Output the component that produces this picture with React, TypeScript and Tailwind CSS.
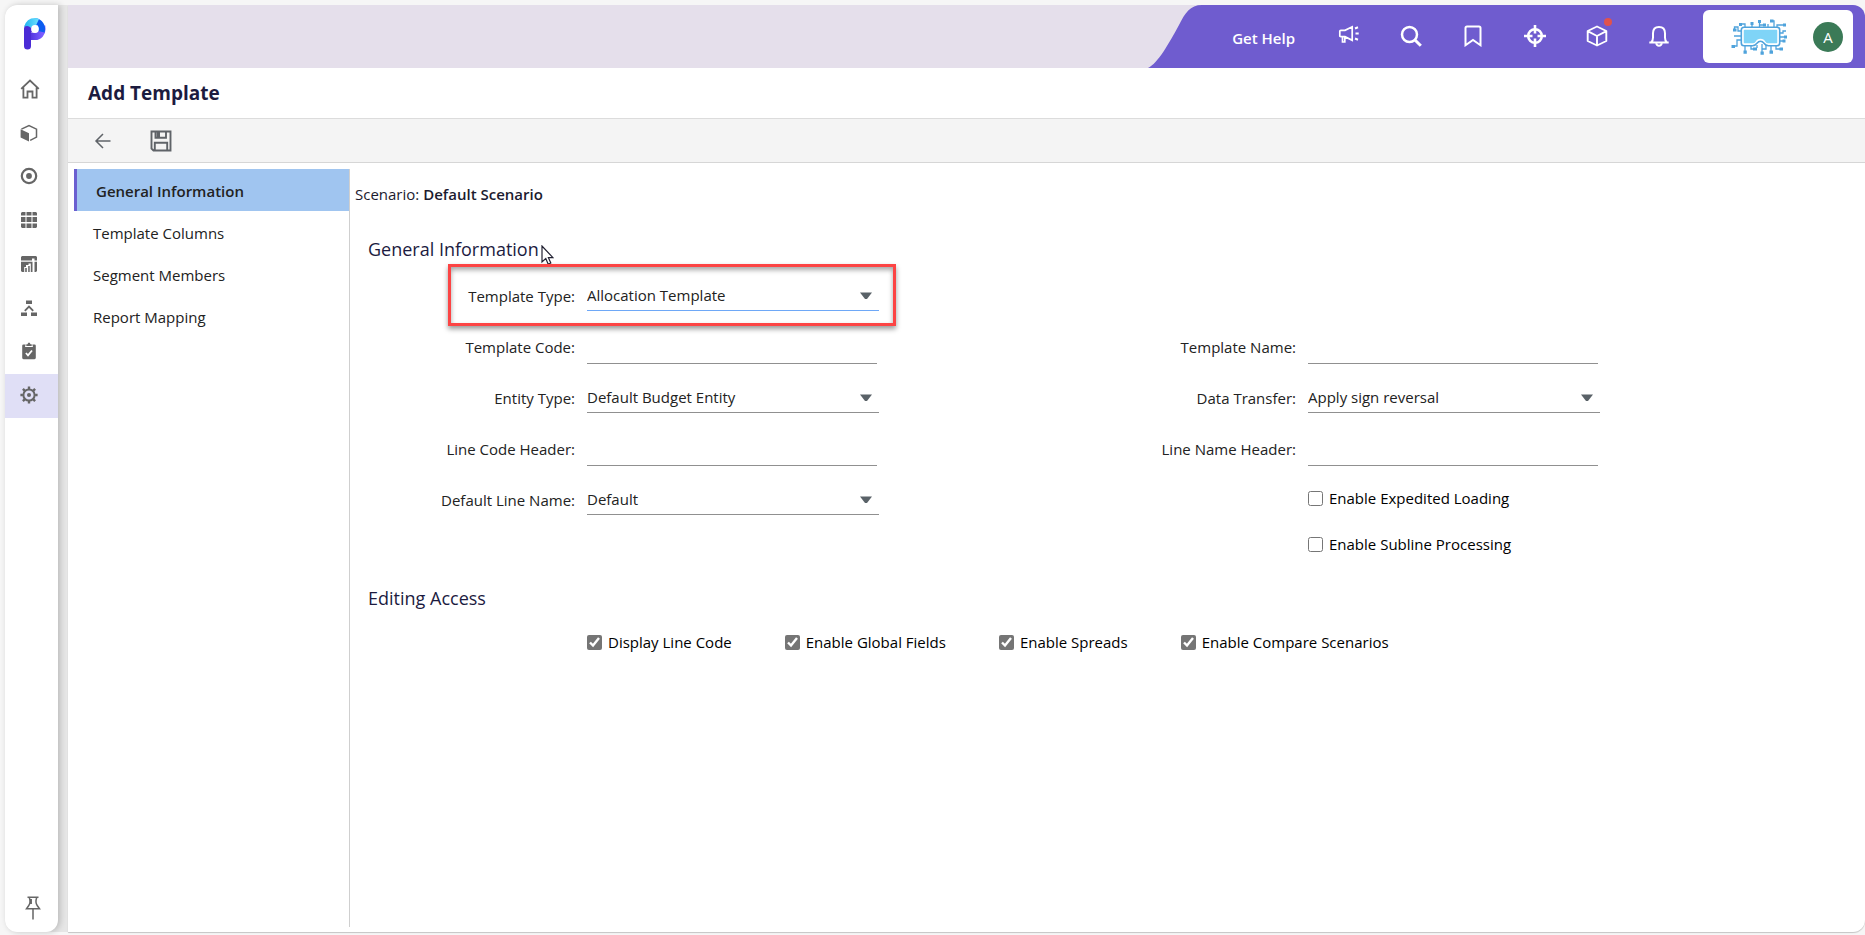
import type { ReactNode } from "react";

const navItems = ["Template Columns", "Segment Members", "Report Mapping"];

const editingOptions = [
  { id: "displayLineCode", label: "Display Line Code" },
  { id: "enableGlobalFields", label: "Enable Global Fields" },
  { id: "enableSpreads", label: "Enable Spreads" },
  { id: "enableCompareScenarios", label: "Enable Compare Scenarios" },
];

function Logo() {
  return (
    <svg width="22" height="32" viewBox="0 0 22 32">
      <defs>
        <linearGradient id="stem" x1="0" y1="0" x2="1" y2="0">
          <stop offset="0" stopColor="#4a2bd6" />
          <stop offset="1" stopColor="#7a5cff" />
        </linearGradient>
        <linearGradient id="arc" x1="0" y1="0" x2="1" y2="0">
          <stop offset="0" stopColor="#1fb4f0" />
          <stop offset="1" stopColor="#6fe0ff" />
        </linearGradient>
      </defs>
      <path d="M4 11H18a7 7 0 0 1-7 7.500H3.500z" fill="none" stroke="url(#stem)" strokeWidth="7" />
      <path d="M11 0a11 11 0 0 1 9.500 14.500L14 13V7.500L11 7z" fill="#0b5cf0" />
      <path d="M0 11q0-3 3.500-3T7 12v16q0 3.500-3.500 3.500T0 28z" fill="#4a2bd6" />
      <path d="M0 9Q2.500 0 11 0q3 0 4 1L12 7.500Q8 7.500 7 10 4 6.500 0 9z" fill="url(#arc)" />
      <circle cx="11" cy="11" r="3.900" fill="#fff" />
    </svg>
  );
}

function HomeIcon() {
  return (
    <svg width="20" height="20" viewBox="0 0 20 20" fill="none" stroke="currentColor" strokeWidth="1.800">
      <path d="M1.200 9.800 10 1.600l8.800 8.200M3.400 8.500V18.600h4.100v-6.100h5v6.100h4.100V8.500" />
    </svg>
  );
}

function CubeIcon() {
  return (
    <svg width="18" height="18" viewBox="0 0 18 18" fill="none" stroke="currentColor" strokeWidth="1.500">
      <path d="M1.400 5.200 9 1.500l7.500 3.700v7.900L10.200 16.300" />
      <path d="M.6 5.200 9 9.200v8.300L.6 13.600z" fill="currentColor" stroke="none" />
    </svg>
  );
}

function TargetIcon() {
  return (
    <svg width="18" height="18" viewBox="0 0 18 18" fill="none">
      <circle cx="9" cy="9" r="7.200" stroke="currentColor" strokeWidth="2.200" />
      <circle cx="9" cy="9" r="2.900" fill="currentColor" />
    </svg>
  );
}

function GridIcon() {
  return (
    <svg width="18" height="18" viewBox="0 0 18 18" fill="currentColor">
      <path d="M2 1h3.500v3.500H1V2zM6.500 1h5v3.500h-5zM12.500 1H16l1 1v2.500h-4.500zM1 6h4.500v5H1zM6.500 6h5v5h-5zM12.500 6H17v5h-4.500zM1 12.500h4.500V17H2l-1-1zM6.500 12.500h5V17h-5zM12.500 12.500H17V16l-1 1h-3.500z" />
    </svg>
  );
}

function ReportIcon() {
  return (
    <svg width="18" height="18" viewBox="0 0 18 18" fill="currentColor">
      <path d="M2 1h14l1 1v3.500h-2.500V3.500H12v2H1V2z" />
      <path d="M1 6.800h11.500V17h-1.700V8.500H8.500V10H6v2H4.200v5H2l-1-1zM5.200 13h1.600v4H5.200zM8.200 11h1.500v6H8.200zM14.500 6.800H17V16l-1 1h-1.500z" />
    </svg>
  );
}

function HierarchyIcon() {
  return (
    <svg width="18" height="18" viewBox="0 0 18 18" fill="currentColor">
      <path d="M6 1.500h6V5H6zM1 13.500h6V17H1zM11 13.500h6V17h-6z" />
      <path d="M4.800 11.800 9 7.500l4.200 4.300" fill="none" stroke="currentColor" strokeWidth="1.800" />
    </svg>
  );
}

function ClipboardIcon() {
  return (
    <svg width="18" height="18" viewBox="0 0 18 18" fill="currentColor">
      <path d="M3.500 2.500h2.200L5 5h8l-.7-2.500h2.200q1.300 0 1.300 1.300v12q0 1.400-1.300 1.400h-11Q2.200 17.200 2.200 15.800v-12q0-1.300 1.300-1.300z" />
      <path d="M6.300 4V2.200h1.200Q8 .5 9 .5t1.500 1.700h1.200V4z" />
      <path d="m5.900 11 2.100 2.300 4-4.800" fill="none" stroke="#fff" strokeWidth="1.800" />
    </svg>
  );
}

function GearIcon() {
  return (
    <svg width="18" height="18" viewBox="0 0 18 18" fill="none" stroke="currentColor">
      <circle cx="9" cy="9" r="5.600" strokeWidth="2" />
      <path d="M9 .4v2.500M9 15.100v2.500M.4 9h2.500M15.100 9h2.500M2.900 2.900l2 2M13.100 13.100l2 2M2.900 15.100l2-2M13.100 4.900l2-2" strokeWidth="2.400" />
      <circle cx="9" cy="9" r="2" fill="currentColor" stroke="none" />
    </svg>
  );
}

function PinIcon() {
  return (
    <svg width="16" height="24" viewBox="0 0 16 24" fill="none" stroke="currentColor" strokeWidth="1.500">
      <path d="M2.500 1.200h11M4.300 1.500q1.700 5-.5 8L1.500 12.700h13l-2.300-3.200q-2.200-3-.5-8M8 13v10.500M6.200 3v5" />
    </svg>
  );
}

const railItems: { name: string; icon: ReactNode }[] = [
  { name: "Home", icon: <HomeIcon /> },
  { name: "Models", icon: <CubeIcon /> },
  { name: "Planning", icon: <TargetIcon /> },
  { name: "Grid", icon: <GridIcon /> },
  { name: "Reports", icon: <ReportIcon /> },
  { name: "Hierarchy", icon: <HierarchyIcon /> },
  { name: "Tasks", icon: <ClipboardIcon /> },
  { name: "Settings", icon: <GearIcon /> },
];

const headerItems: { name: string; icon: ReactNode }[] = [
  {
    name: "Announcements",
    icon: (
      <svg width="22" height="22" viewBox="0 0 22 22" fill="none" stroke="currentColor" strokeWidth="1.700">
        <path d="M1.800 6.300q0-1 1-1H7l7.200-3.500v13.500L7 11.700H2.800q-1 0-1-1zM4.500 12v5h2.300v-4.600" />
        <path d="m17 3.500 3-1.200M17.500 8.500h3.200M17 13.500l3 1.200" strokeWidth="2" />
      </svg>
    ),
  },
  {
    name: "Search",
    icon: (
      <svg width="22" height="22" viewBox="0 0 22 22" fill="none" stroke="currentColor" strokeWidth="2.500">
        <circle cx="9.500" cy="9.500" r="7.500" />
        <path d="m15 15 5.800 5.800" strokeWidth="3" />
      </svg>
    ),
  },
  {
    name: "Bookmarks",
    icon: (
      <svg width="22" height="22" viewBox="0 0 22 22" fill="none" stroke="currentColor" strokeWidth="2">
        <path d="M3.500 3q0-1.500 1.500-1.500h12q1.500 0 1.500 1.500v17.200L11 15l-7.500 5.200z" />
      </svg>
    ),
  },
  {
    name: "Locate",
    icon: (
      <svg width="22" height="22" viewBox="0 0 22 22" fill="none" stroke="currentColor">
        <circle cx="11" cy="11" r="6.800" strokeWidth="2.600" />
        <path d="M11 0v8.500M11 13.500V22M0 11h8.500M13.500 11H22" strokeWidth="2.600" />
      </svg>
    ),
  },
  {
    name: "Apps",
    icon: (
      <svg width="22" height="22" viewBox="0 0 22 22" fill="none" stroke="currentColor" strokeWidth="1.900">
        <path d="M11 1.500 20.300 6v10L11 20.500 1.700 16V6zM1.700 6.200 11 11l9.300-4.800M11 11v9.500" strokeLinejoin="round" />
      </svg>
    ),
  },
  {
    name: "Notifications",
    icon: (
      <svg width="22" height="22" viewBox="0 0 22 22" fill="none" stroke="currentColor" strokeWidth="2">
        <path d="M1.300 17.600h19.400M3.300 17.200q1.700-1.700 1.700-4.700V8.300Q5 2 11 2t6 6.300v4.200q0 3 1.700 4.700" />
        <path d="M8.200 18.200q.4 2.500 2.800 2.500t2.800-2.500" />
      </svg>
    ),
  },
];

function CompanyLogo() {
  return (
    <svg width="56" height="36" viewBox="0 0 56 36" fill="none" stroke="#4fa3dc" strokeWidth="1.300">
      <path d="M12 11.500q0-1.500 1.500-1.500h32q1.500 0 1.500 1.500v12q0 1.500-1.500 1.500H37q-2 0-3-1.700Q32.300 20.500 29.500 20.500T25 23.300Q24 25 22 25h-8.500Q12 25 12 23.500z" fill="#7fd4f7" stroke="#fff" strokeWidth="1.500" />
      <path d="M10.300 11q0-2.700 2.700-2.700h33q2.700 0 2.700 2.700v13q0 2.700-2.700 2.700h-8.500q-3 0-4.500-2.500-1.500-2-3.500-2T26 24.200q-1.500 2.500-4.500 2.500H13q-2.700 0-2.700-2.700z" strokeWidth="1.600" />
      <path d="M14 8V5H9.500M21 8V4M28.500 8V2M28.500 6H33M37 8V5M43 8V2h-2M46 8V6h7.500M10 12H7V8H3.500V11M10 17H3M10 21H6v6H2M49 14h3v-2h3M49 18h5M49 22h4M14 27v6M20 27v3h4M26 26v3M31 25v9M31 30h4V26M40 27v6M45 27v3h5" />
      <path d="M8 4h3v3H8zM19.500 3h3v3h-3zM27 1h3v3h-3zM32 4.500h3v3h-3zM39 .5h3.500v3H39zM52 4.500h3v3h-3zM2 9.500h3.500v3H2zM.5 26H4v3H.5zM12.500 31.500h3.300v3.300h-3.300zM22 28.500h4v3h-4zM29.500 32.500h3.300v3.300h-3.300zM38.500 31.500H42v3.300h-3.500zM48.500 28.500H52v3h-3.500zM53 16.500h3v3h-3zM51.500 20.500h3v3h-3z" fill="#4fa3dc" stroke="none" />
    </svg>
  );
}

function FormRow({ id, label, children }: { id: string; label: string; children: ReactNode }) {
  return (
    <div className="relative flex h-[51px] w-[513px] items-center gap-3">
      <label htmlFor={id} className="w-[208px] shrink-0 pb-[2px] text-right">
        {label}
      </label>
      {children}
    </div>
  );
}

function TextRow({ id, label }: { id: string; label: string }) {
  return (
    <FormRow id={id} label={label}>
      <input id={id} type="text" className="h-8 w-[290px] border-b border-[#909090] bg-transparent outline-none" />
    </FormRow>
  );
}

function SelectRow({ id, label, value, active = false }: { id: string; label: string; value: string; active?: boolean }) {
  return (
    <FormRow id={id} label={label}>
      <div className="relative w-[292px]">
        <select
          id={id}
          className={`block h-7 w-full appearance-none border-b bg-transparent pb-[2px] outline-none ${
            active ? "border-[#6ea8f7]" : "border-[#909090]"
          }`}
        >
          <option>{value}</option>
        </select>
        <svg className="pointer-events-none absolute top-[9px] right-[7px]" width="12" height="8" viewBox="0 0 12 8" fill="#5a6268">
          <path d="M0 .5h12L7 7H5z" />
        </svg>
      </div>
      {/* Highlight around the field */}
      {active && (
        <div className="pointer-events-none absolute -top-[7px] -right-4 -bottom-1 left-[81px] border-3 border-[#fc4444] shadow-[0_3px_5px_rgba(0,0,0,0.4),inset_0_3px_5px_rgba(0,0,0,0.35)]" />
      )}
    </FormRow>
  );
}

function CheckField({ id, label, checked = false }: { id: string; label: string; checked?: boolean }) {
  return (
    <div className="flex items-center gap-[6px] text-black">
      <input id={id} type="checkbox" defaultChecked={checked} className="size-[15px] accent-[#757575]" />
      <label htmlFor={id}>{label}</label>
    </div>
  );
}

export default function App() {
  return (
    <div className="flex min-h-screen bg-[#f6f6f6] pt-[5px] pb-[3px] pl-[5px] font-['Open_Sans',sans-serif] text-[15px] leading-5 text-[#222]">
      {/* Icon rail */}
      <div className="flex shrink-0 rounded-l-xl bg-[#e6e6e6] pr-[10px]">
        <aside className="flex w-[53px] flex-col rounded-l-xl rounded-br-xl bg-white text-[#666] shadow-[2px_0_6px_rgba(0,0,0,0.2)]">
          <a href="#" aria-label="Start" className="flex h-[63px] items-start pt-[13px] pl-[19px]">
            <Logo />
          </a>
          <nav className="flex h-[350px] flex-col">
            {railItems.map((item) => (
              <button
                key={item.name}
                aria-label={item.name}
                className={`flex flex-1 items-center pb-[2px] pl-[15px] ${item.name === "Settings" ? "bg-[#e0dff6]" : ""}`}
              >
                {item.icon}
              </button>
            ))}
          </nav>
          <button aria-label="Pin menu" className="mt-auto mb-3 flex pl-5">
            <PinIcon />
          </button>
        </aside>
      </div>

      <div className="flex min-w-0 flex-1 flex-col overflow-hidden rounded-r-xl bg-white shadow-[0_1px_1px_rgba(0,0,0,0.2)]">
        {/* Top bar */}
        <header className="flex h-[63px] justify-end bg-[#e5dfeb]">
          <svg width="60" height="63" viewBox="0 0 60 63" fill="#6f5ccf">
            <path d="M0 63C10 58 20 40 31 20 37 8 42 0 54 0H60V63z" />
          </svg>
          <div className="flex items-center bg-[#6f5ccf] pr-3 text-white">
            <a href="#" className="mt-[2px] mr-[43px] ml-6 font-semibold">
              Get Help
            </a>
            <div className="flex gap-10 pr-[33px] pb-[2px]">
              {headerItems.map((item) => (
                <button key={item.name} aria-label={item.name} className="relative">
                  {item.icon}
                  {item.name === "Apps" && <span className="absolute -top-[7px] -right-1 size-2 rounded-full bg-[#e0524d]" />}
                </button>
              ))}
            </div>
            <div className="flex h-[53px] w-[150px] items-center justify-between rounded-md bg-white pr-[10px] pl-7">
              <CompanyLogo />
              <button className="size-[30px] rounded-full bg-[#3b7a57] text-white">A</button>
            </div>
          </div>
        </header>

        <h1 className="flex h-[51px] items-center border-b border-[#dcdcdc] pl-5 text-[19px] font-bold text-[#1c1b3f]">
          Add Template
        </h1>

        {/* Toolbar */}
        <div className="flex h-11 items-center gap-[38px] border-b border-[#d6d6d6] bg-[#f4f4f4] pl-[26px] text-[#5f6368]">
          <button aria-label="Back">
            <svg width="18" height="18" viewBox="0 0 18 18" fill="none" stroke="currentColor" strokeWidth="1.500">
              <path d="M16.500 9H2M9 2 2 9l7 7" />
            </svg>
          </button>
          <button aria-label="Save">
            <svg width="22" height="22" viewBox="0 0 22 22" fill="none" stroke="currentColor" strokeWidth="1.900">
              <path d="M1.500 1.500h19v19h-17l-2-2zM5.500 1.500v6.300h10.500V1.500M4.800 20.500v-7.700h12.400v7.700" />
              <path d="M6.500 2h3.500v5H6.500z" fill="currentColor" stroke="none" />
            </svg>
          </button>
        </div>

        <div className="flex flex-1 pt-[6px] pb-[5px] pl-[6px]">
          <nav className="w-[276px] shrink-0 border-r border-[#cfcfcf]">
            <a href="#" className="flex h-[42px] items-center border-l-3 border-[#6a5fd0] bg-[#a0c5f0] pt-[2px] pl-[19px] font-semibold">
              General Information
            </a>
            {navItems.map((item) => (
              <a key={item} href="#" className="flex h-[42px] items-center pt-[2px] pl-[19px]">
                {item}
              </a>
            ))}
          </nav>

          <main className="min-w-0 flex-1">
            <p className="pt-[15px] pl-[5px] text-[#1c1b2f]">
              Scenario: <span className="font-semibold">Default Scenario</span>
            </p>

            <form className="pr-14 pl-[17px]">
              <div className="mt-[31px] flex h-7 items-center pl-px">
                <h2 className="text-lg text-[#1c1b3f]">General Information</h2>
                {/* Pointer */}
                <svg className="mt-3 ml-[2px]" width="13" height="20" viewBox="0 0 13 20" fill="#fff" stroke="#222233" strokeWidth="1.200">
                  <path d="M1 1v16l3.800-3.500 2.400 5.700 2.600-1.200-2.400-5.300H12z" />
                </svg>
              </div>

              <div className="mt-2 grid grid-cols-2">
                <div>
                  <SelectRow id="templateType" label="Template Type:" value="Allocation Template" active />
                  <TextRow id="templateCode" label="Template Code:" />
                  <SelectRow id="entityType" label="Entity Type:" value="Default Budget Entity" />
                  <TextRow id="lineCodeHeader" label="Line Code Header:" />
                  <SelectRow id="defaultLineName" label="Default Line Name:" value="Default" />
                </div>
                <div className="pt-[51px]">
                  <TextRow id="templateName" label="Template Name:" />
                  <SelectRow id="dataTransfer" label="Data Transfer:" value="Apply sign reversal" />
                  <TextRow id="lineNameHeader" label="Line Name Header:" />
                  <div className="flex flex-col gap-[26px] pt-[13px] pl-[220px]">
                    <CheckField id="expeditedLoading" label="Enable Expedited Loading" />
                    <CheckField id="sublineProcessing" label="Enable Subline Processing" />
                  </div>
                </div>
              </div>

              {/* Editing access */}
              <h2 className="mt-[30px] pl-px text-lg text-[#1c1b3f]">Editing Access</h2>
              <div className="mt-5 flex gap-[53px] pl-[220px]">
                {editingOptions.map((option) => (
                  <CheckField key={option.id} id={option.id} label={option.label} checked />
                ))}
              </div>
            </form>
          </main>
        </div>
      </div>
    </div>
  );
}
